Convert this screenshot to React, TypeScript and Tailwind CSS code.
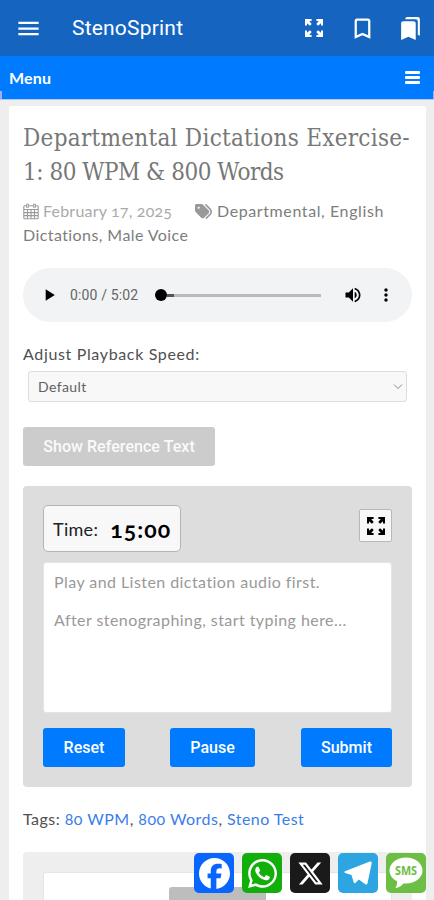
import React from "react";
import { MdBookmarkBorder, MdBookmarks, MdMenu, MdMoreVert, MdPlayArrow, MdVolumeUp } from "react-icons/md";
import { FaFacebook, FaTags, FaWhatsapp, FaXTwitter } from "react-icons/fa6";

function CalendarIcon() {
  return (
    <svg width="16" height="17" viewBox="0 0 16 17" fill="none" stroke="#999" strokeWidth="1.1">
      <rect x=".8" y="2.8" width="14.4" height="13" rx="1" />
      <path d="M1 6.5h14M1 9.6h14M1 12.6h14M4.5 6.5v9M8 6.5v9M11.5 6.5v9" />
      <path d="M4.5 .8v4M11.5 .8v4" strokeWidth="2.6" />
      <path d="M4.5 1.5v2.6M11.5 1.5v2.6" stroke="#fff" strokeWidth=".7" />
    </svg>
  );
}

function ExpandIcon() {
  return (
    <svg width="20" height="20" viewBox="0 0 20 20" fill="currentColor">
      <path d="M1 1h6.6v2H5.2l2.5 2.9-1.8 1.8L3 5.2v2.4H1Z" />
      <path d="M19 1v6.6h-2V5.2l-2.9 2.5-1.8-1.8L14.8 3h-2.4V1Z" />
      <path d="M1 19v-6.6h2v2.4l2.9-2.5 1.8 1.8L5.2 17h2.4v2Z" />
      <path d="M19 19h-6.6v-2h2.4l-2.5-2.9 1.8-1.8 2.9 2.5v-2.4h2Z" />
    </svg>
  );
}

function AppHeader() {
  return (
    <header className="flex h-14 items-center bg-[#1565c0] text-white">
      <MdMenu className="ml-[15px] size-[27px]" />
      <h1 className="ml-[30px] pt-[2px] font-['Roboto',sans-serif] text-[21px] tracking-[0.2px]">StenoSprint</h1>
      <div className="ml-auto flex items-center">
        <ExpandIcon />
        <MdBookmarkBorder className="ml-[25px] size-[27px]" />
        <MdBookmarks className="mr-[11px] ml-[22px] size-[25px]" />
      </div>
    </header>
  );
}

function MenuBar() {
  return (
    <nav className="relative flex h-11 items-center justify-between border-b border-[#a9c8ff] bg-[#007bff] pr-[10px] pl-[9px] text-white">
      <span className="text-[16px] font-bold tracking-[0.2px]">Menu</span>
      <span className="mr-[4px] flex w-[15px] flex-col gap-[2px]">
        <span className="h-[3px] rounded-[1px] bg-white" />
        <span className="h-[3px] rounded-[1px] bg-white" />
        <span className="h-[3px] rounded-[1px] bg-white" />
      </span>
      <span className="absolute bottom-0 left-0 h-2 w-[2px] bg-[#9fadf5]" />
      <span className="absolute right-0 bottom-0 h-2 w-px bg-[#9fadf5]" />
    </nav>
  );
}

function AudioPlayer() {
  return (
    <div className="mt-[21px] flex h-[54px] items-center rounded-full bg-[#f1f3f4] text-black">
      <MdPlayArrow className="ml-[16px] size-[20px]" />
      <span className="ml-[11px] w-[80px] font-['Roboto',sans-serif] text-[14px] tracking-[0.15px] whitespace-nowrap text-[#666]">0:00 / 5:02</span>
      <div className="ml-[5px] flex w-[166px] items-center">
        <span className="size-3 rounded-full bg-black" />
        <span className="h-[3px] w-[7px] bg-[#555]" />
        <span className="h-[3px] flex-1 bg-[#b9babb]" />
      </div>
      <MdVolumeUp className="ml-[22px] size-[20px]" />
      <MdMoreVert className="ml-[13px] size-[20px]" />
    </div>
  );
}

function ActionButton({ label, className }: { label: string; className: string }) {
  return (
    <button className={`h-[39px] rounded-[3px] bg-[#007bff] font-['Roboto',sans-serif] text-[16px] font-medium text-white ${className}`}>
      {label}
    </button>
  );
}

function TypingPanel() {
  return (
    <section className="mt-[20px] h-[301px] rounded-[4px] bg-[#ddd] px-[20px] pt-[19px]">
      <div className="flex items-start justify-between">
        <div className="flex h-[47px] w-[138px] items-center rounded-[5px] border border-[#b4b4b4] bg-[#f8f8f8] pt-[2px] pl-[9px]">
          <span className="text-[18px] tracking-[0.3px] text-[#222]">Time:</span>
          <span className="ml-[12px] text-[23px] font-bold tracking-[1.1px] text-black oldstyle-nums">15:00</span>
        </div>
        <button className="mt-[4px] grid size-[33px] place-items-center rounded-[2px] border border-[#b8b8b8] bg-[#f8f8f8] text-black">
          <ExpandIcon />
        </button>
      </div>
      <div className="mt-[10px] h-[151px] rounded-[3px] border border-[#e4e4e4] bg-white px-[10px] pt-[9px] text-[16px] leading-[19px] text-[#999]">
        <p className="tracking-[0.44px]">Play and Listen dictation audio first.</p>
        <p className="mt-[19px] tracking-[0.44px]">After stenographing, start typing here...</p>
      </div>
      <div className="mt-[15px] flex justify-between">
        <ActionButton label="Reset" className="w-[82px]" />
        <ActionButton label="Pause" className="mr-px w-[85px]" />
        <ActionButton label="Submit" className="w-[91px]" />
      </div>
    </section>
  );
}

function ShareBar() {
  const tile = "grid size-10 place-items-center rounded-[5px] text-white";
  return (
    <div className="absolute bottom-[7px] left-[194px] flex gap-[8px]">
      <span className={`${tile} bg-[#0866ff]`}><FaFacebook className="size-[31px]" /></span>
      <span className={`${tile} bg-[#12af0a]`}><FaWhatsapp className="size-[33px]" /></span>
      <span className={`${tile} bg-[#1a1a1a]`}>
        <FaXTwitter className="size-[27px]" />
      </span>
      <span className={`${tile} bg-[#2ca5e0]`}>
        <svg viewBox="0 0 32 32" className="size-10" fill="#fff"><path d="M25.515 6.896 6.027 14.41c-1.33.534-1.322 1.276-.243 1.606l5 1.56 1.72 5.66c.226.625.115.873.77.873.506 0 .73-.235 1.012-.51l2.43-2.363 5.056 3.734c.93.514 1.602.25 1.834-.863l3.32-15.638c.338-1.363-.52-1.98-1.41-1.577z" /></svg>
      </span>
      <span className={`${tile} bg-[#6cbe45]`}>
        <svg viewBox="0 0 40 40" className="size-10">
          <path d="M20 4.5c-9.2 0-16.5 5.8-16.5 13 0 4.5 2.9 8.4 7.5 10.7.3 2.4-.2 4.8-1.7 7 3.8-.8 6.3-2.3 8-4.8.9.1 1.8.1 2.7.1 9.2 0 16.5-5.8 16.5-13s-7.3-13-16.5-13Z" fill="#fff" />
          <text x="20" y="21.8" textAnchor="middle" textLength="22" lengthAdjust="spacingAndGlyphs" fontFamily="Open Sans, sans-serif" fontSize="11.5" fontWeight="700" fill="#6cbe45">SMS</text>
        </svg>
      </span>
    </div>
  );
}

export default function App() {
  return (
    <div className="relative flex h-[900px] w-[434px] flex-col overflow-hidden bg-[#eee] font-['Lato',sans-serif]">
      <AppHeader />
      <MenuBar />
      <main className="mt-[6px] mr-[8px] ml-[9px] flex-1 overflow-hidden rounded-t-[2px] bg-white pr-[14px] pl-[14px]">
        <h2 className="mt-[15px] font-['DejaVu_Serif_Condensed','DejaVu_Serif',serif] text-[24px] leading-[34px] whitespace-nowrap text-[#777]">
          <span className="block tracking-[0.28px]">Departmental Dictations Exercise-</span>
          <span className="block tracking-[-0.48px]">1: 80 WPM &amp; 800 Words</span>
        </h2>
        <div className="mt-[10px] text-[16px] leading-[24px] whitespace-nowrap text-[#7d7d7d]">
          <div className="flex items-center">
            <CalendarIcon />
            <span className="ml-[4px] w-[130px] tracking-[0.2px] text-[#aaa] oldstyle-nums">February 17, 2025</span>
            <FaTags className="ml-[22px] size-[17px] text-[#999]" />
            <span className="ml-[5px] tracking-[0.6px]">Departmental, English</span>
          </div>
          <div className="tracking-[0.42px]">Dictations, Male Voice</div>
        </div>
        <AudioPlayer />
        <div className="mt-[20px] text-[16px] leading-[24px] tracking-[0.65px] text-[#505050]">Adjust Playback Speed:</div>
        <div className="mt-[5px] mr-[5px] ml-[5px] flex h-[31px] items-center justify-between rounded-[3px] border border-[#ddd] bg-[#f8f8f8] pr-[3px] pl-[9px] text-[14px] text-[#606060]">
          <span className="tracking-[0.4px]">Default</span>
          <svg width="10" height="7" viewBox="0 0 10 7" fill="none" stroke="#888"><path d="m1 1.5 4 4 4-4" /></svg>
        </div>
        <button className="mt-[25px] block h-[39px] w-[192px] rounded-[3px] bg-[#ccc] font-['Roboto',sans-serif] text-[16px] font-medium tracking-[0.05px] text-[#fafafa]">Show Reference Text</button>
        <TypingPanel />
        <div className="mt-[20px] text-[16px] leading-[24px] tracking-[0.46px] text-[#505050] oldstyle-nums">
          Tags: <span className="text-[#3b7de8]">80 WPM</span>, <span className="text-[#3b7de8]">800 Words</span>, <span className="text-[#3b7de8]">Steno Test</span>
        </div>
        <div className="mt-[21px] h-[60px] rounded-t-[4px] bg-[#eee] px-[20px] pt-[20px]">
          <div className="flex h-10 justify-center rounded-t-[3px] border border-[#e5e5e5] bg-white pt-[14px]">
            <div className="h-10 w-[97px] rounded-t-[3px] bg-[#bdbdbd]" />
          </div>
        </div>
      </main>
      <ShareBar />
    </div>
  );
}
